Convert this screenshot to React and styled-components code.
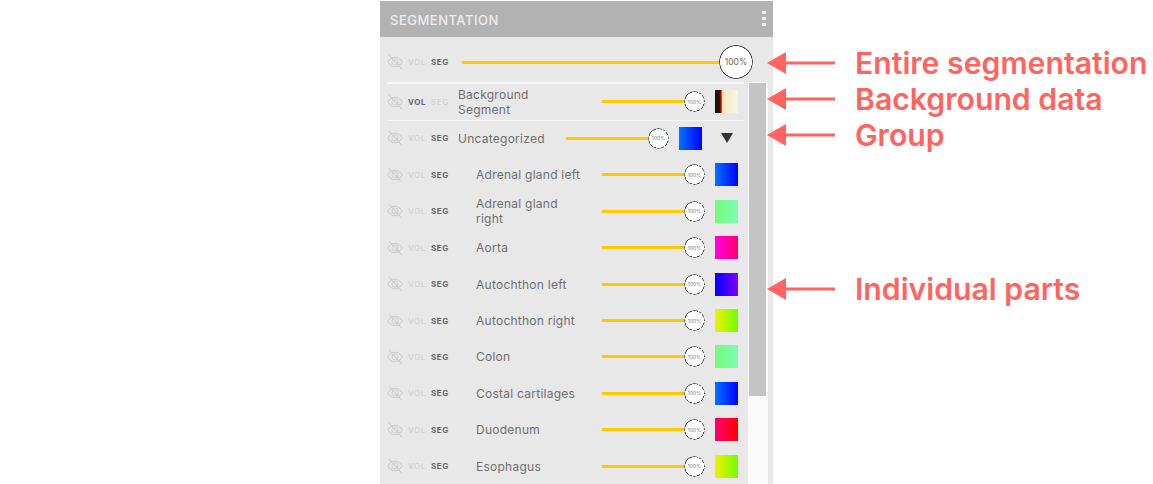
import React from 'react';
import styled, { createGlobalStyle } from 'styled-components';

const GlobalStyle = createGlobalStyle`
  html, body {
    margin: 0;
    background: #fff;
    overflow: hidden;
    font-family: Inter, "Liberation Sans", sans-serif;
  }
`;

const parts = [
  { name: 'Adrenal gland left', colors: ['#0073ff', '#0000ff'] },
  { name: 'Adrenal gland right', colors: ['#74fb74', '#7ffbb8'] },
  { name: 'Aorta', colors: ['#ff00e0', '#ff0070'] },
  { name: 'Autochthon left', colors: ['#0000ff', '#8000ff'] },
  { name: 'Autochthon right', colors: ['#f0f000', '#70ff00'] },
  { name: 'Colon', colors: ['#74fb74', '#7ffbb8'] },
  { name: 'Costal cartilages', colors: ['#0073ff', '#0000ff'] },
  { name: 'Duodenum', colors: ['#ff0070', '#ff0000'] },
  { name: 'Esophagus', colors: ['#f0f000', '#70ff00'] },
];

const callouts = [
  { text: 'Entire segmentation', top: 63 },
  { text: 'Background data', top: 99 },
  { text: 'Group', top: 135 },
  { text: 'Individual parts', top: 289 },
];

const EyeOff = () => (
  <EyeIcon viewBox="0 0 17 17" fill="none" stroke="#cdcdcd" strokeWidth="1.1">
    <path d="M.8 8.500C3 5 5.600 3.500 8.500 3.500s5.500 1.500 7.700 5C14 12 11.400 13.500 8.500 13.500S3 12 .8 8.500Z" />
    <circle cx="8.500" cy="8.500" r="3.200" />
    <path d="M2 1 15.800 16" />
  </EyeIcon>
);

const Tools = ({ active = 'seg', wide }) => (
  <ToolBox $wide={wide}>
    <EyeOff />
    <Mode $on={active === 'vol'}>VOL</Mode>
    <Mode $on={active === 'seg'}>SEG</Mode>
  </ToolBox>
);

const Row = ({ label, child, colors, active, background, group }) => (
  <RowBox $group={group}>
    <Tools active={active} />
    <Label $child={child} $group={group}>{label}</Label>
    <Track />
    <Knob>100%</Knob>
    <Swatch $colors={colors} $background={background} />
    {group && <Caret />}
  </RowBox>
);

const App = () => (
  <Page>
    <GlobalStyle />
    <Panel>
      <Header>
        <Title>SEGMENTATION</Title>
        <Kebab>
          <i />
          <i />
          <i />
        </Kebab>
      </Header>
      <TopRow>
        <Tools wide />
        <Track $fill />
        <BigKnob>100%</BigKnob>
      </TopRow>
      <Body>
        <List>
          <Divider />
          <Row label="Background Segment" active="vol" background />
          <Divider />
          <Row label="Uncategorized" colors={['#0073ff', '#0000ff']} group />
          {parts.map((p) => (
            <Row key={p.name} label={p.name} colors={p.colors} child />
          ))}
        </List>
        <Scrollbar>
          <Thumb />
        </Scrollbar>
      </Body>
    </Panel>
    {callouts.map((c) => (
      <Callout key={c.text} $top={c.top}>
        <svg width="68" height="24" viewBox="0 0 68 24">
          <path d="M0 12 19 1V10.500H68V13.500H19V23Z" fill="#ff6461" />
        </svg>
        <CalloutText>{c.text}</CalloutText>
      </Callout>
    ))}
  </Page>
);

const Page = styled.div`
  position: relative;
  height: 484px;
  padding: 1px 0 0 380px;
  box-sizing: border-box;
  overflow: hidden;
`;

const Panel = styled.section`
  width: 393px;
  height: 483px;
  display: flex;
  flex-direction: column;
  background: #e8e8e8;
  overflow: hidden;
`;

const Header = styled.header`
  height: 36px;
  flex: none;
  display: flex;
  align-items: center;
  justify-content: space-between;
  padding: 0 7px 0 10px;
  background: #b2b2b2;
`;

const Title = styled.h1`
  margin: 2px 0 0;
  font-size: 13px;
  font-weight: 500;
  letter-spacing: 0.5px;
  color: #ececec;
`;

const Kebab = styled.div`
  display: flex;
  flex-direction: column;
  gap: 3px;
  margin-top: -2px;

  i {
    display: block;
    width: 4px;
    height: 3px;
    background: #ececec;
  }
`;

const TopRow = styled.div`
  height: 45px;
  flex: none;
  display: flex;
  align-items: center;
  padding: 5px 20px 0 7px;
  box-sizing: border-box;
`;

const ToolBox = styled.div`
  width: ${(p) => (p.$wide ? 75 : 71)}px;
  flex: none;
  display: flex;
  align-items: center;
  gap: 5px;
`;

const EyeIcon = styled.svg`
  width: 16px;
  height: 16px;
  flex: none;
`;

const Mode = styled.span`
  width: 18px;
  font-size: 8px;
  font-weight: ${(p) => (p.$on ? 700 : 500)};
  letter-spacing: 0.6px;
  color: ${(p) => (p.$on ? '#666' : '#cfcfcf')};
`;

const Track = styled.div`
  height: 3px;
  flex: ${(p) => (p.$fill ? 1 : 'none')};
  width: ${(p) => (p.$fill ? 'auto' : '83px')};
  background: #ffc800;
`;

const Knob = styled.div`
  position: relative;
  width: 21px;
  height: 21px;
  flex: none;
  margin-left: -1px;
  display: flex;
  align-items: center;
  justify-content: center;
  border-radius: 50%;
  background: #fff;
  font-size: 5px;
  color: #777;

  /* dashed ring, longer dashes than border: dashed gives at this size */
  &::before {
    content: '';
    position: absolute;
    inset: 0;
    border-radius: 50%;
    background: repeating-conic-gradient(#4a4a4a 0 19deg, transparent 19deg 24deg);
    mask: radial-gradient(closest-side, transparent calc(100% - 1.2px), #000 calc(100% - 1px));
  }
`;

const BigKnob = styled(Knob)`
  width: 34px;
  height: 34px;
  font-size: 8.5px;
  color: #666;

  &::before {
    background: #3c3c3c;
  }
`;

const Body = styled.div`
  flex: 1;
  min-height: 0;
  display: flex;
  padding-right: 5px;
`;

const List = styled.div`
  width: 368px;
  flex: none;
`;

const Divider = styled.div`
  height: 1.5px;
  margin: 0 4px 0 7px;
  background: #f7f7f7;
`;

const RowBox = styled.div`
  height: ${(p) => (p.$group ? 35.4 : 36.4)}px;
  display: flex;
  align-items: center;
  padding: 0 10px ${(p) => (p.$group ? 2 : 0)}px 7px;
  box-sizing: border-box;
`;

const Label = styled.div`
  flex: 1;
  min-width: 0;
  padding: 0 ${(p) => (p.$group ? '0' : '20px')} 0 ${(p) => (p.$child ? '18px' : '0')};
  font-size: 12px;
  line-height: 15px;
  letter-spacing: 0.25px;
  color: #6f6f6f;
`;

const Swatch = styled.div`
  width: 23px;
  height: 23px;
  flex: none;
  margin-left: 10px;
  background: ${(p) =>
    p.$background
      ? 'linear-gradient(90deg, #111 0 8%, #500 12%, #111 17%, #600 22%, #f01000 27%, #f6e9c0 33%, #f8f5e6 100%)'
      : `linear-gradient(90deg, ${p.$colors[0]}, ${p.$colors[1]})`};
`;

const Caret = styled.div`
  width: 0;
  height: 0;
  flex: none;
  margin: 0 5px 0 19px;
  border-left: 6px solid transparent;
  border-right: 6px solid transparent;
  border-top: 10px solid #333;
`;

const Scrollbar = styled.div`
  width: 20px;
  flex: none;
  background: #fafafa;
`;

const Thumb = styled.div`
  width: 17px;
  height: 313px;
  margin: 1px 0 0 1px;
  background: #c4c4c4;
`;

const Callout = styled.div`
  position: absolute;
  left: 767px;
  top: ${(p) => p.$top}px;
  transform: translateY(-50%);
  display: flex;
  align-items: center;
  gap: 20px;
`;

const CalloutText = styled.span`
  font-size: 30.2px;
  font-weight: 600;
  color: #ff6461;
  white-space: nowrap;
`;

export default App;
